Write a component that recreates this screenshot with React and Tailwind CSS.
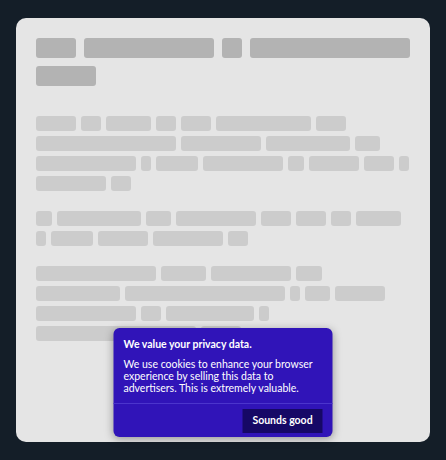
import React from 'react';

// Skeleton placeholder widths, one array per line
const heading = [[40, 130, 20, 160], [60]];
const paragraphs = [
    [
        [40, 20, 45, 20, 30, 95, 30],
        [140, 80, 84, 25],
        [100, 10, 42, 80, 16, 50, 30, 10],
        [70, 20],
    ],
    [
        [16, 84, 25, 80, 30, 30, 20, 45],
        [10, 42, 50, 70, 20],
    ],
    [
        [120, 45, 80, 26],
        [84, 160, 10, 25, 50],
        [100, 20, 88, 10],
        [160, 40],
    ],
];

const CookieBanner = () => (
    <div className="absolute bottom-[5px] left-1/2 -translate-x-1/2 w-[219px] rounded-md bg-[#3014b8] text-white shadow-[0_2px_8px_rgba(0,0,0,0.35)] font-['Lato',sans-serif]">
        <div className="px-[10px] pt-[10px] pb-[9px]">
            <p className="text-[10.5px] leading-3 font-bold">We value your privacy data.</p>
            <p className="mt-2 text-[10.5px] leading-3">
                We use cookies to enhance your browser experience by selling this data to advertisers. This is extremely valuable.
            </p>
        </div>
        <div className="flex justify-end border-t border-[#4b35cc] px-[10px] pt-[5px] pb-[4px]">
            <button className="w-20 h-6 bg-[#160866] text-[10.5px] font-bold">Sounds good</button>
        </div>
    </div>
);

export default function App() {
    return (
        <div className="min-h-[460px] bg-[#141e28] px-4 py-[18px]">
            <div className="relative h-[424px] rounded-[10px] bg-[#e5e5e5] p-5">
                {/* ── Title skeleton ── */}
                <div className="flex flex-col gap-2">
                    {heading.map((row, i) => (
                        <div key={i} className="flex gap-2">
                            {row.map((w, j) => (
                                <span key={j} className="h-5 rounded-[3px] bg-[#b3b3b3]" style={{ width: w }} />
                            ))}
                        </div>
                    ))}
                </div>

                {/* ── Body skeleton ── */}
                <div className="mt-[30px] flex flex-col gap-5">
                    {paragraphs.map((para, i) => (
                        <div key={i} className="flex flex-col gap-[5px]">
                            {para.map((row, j) => (
                                <div key={j} className="flex gap-[5px]">
                                    {row.map((w, k) => (
                                        <span key={k} className="h-[15px] rounded-[3px] bg-[#cccccc]" style={{ width: w }} />
                                    ))}
                                </div>
                            ))}
                        </div>
                    ))}
                </div>

                <CookieBanner />
            </div>
        </div>
    );
}
